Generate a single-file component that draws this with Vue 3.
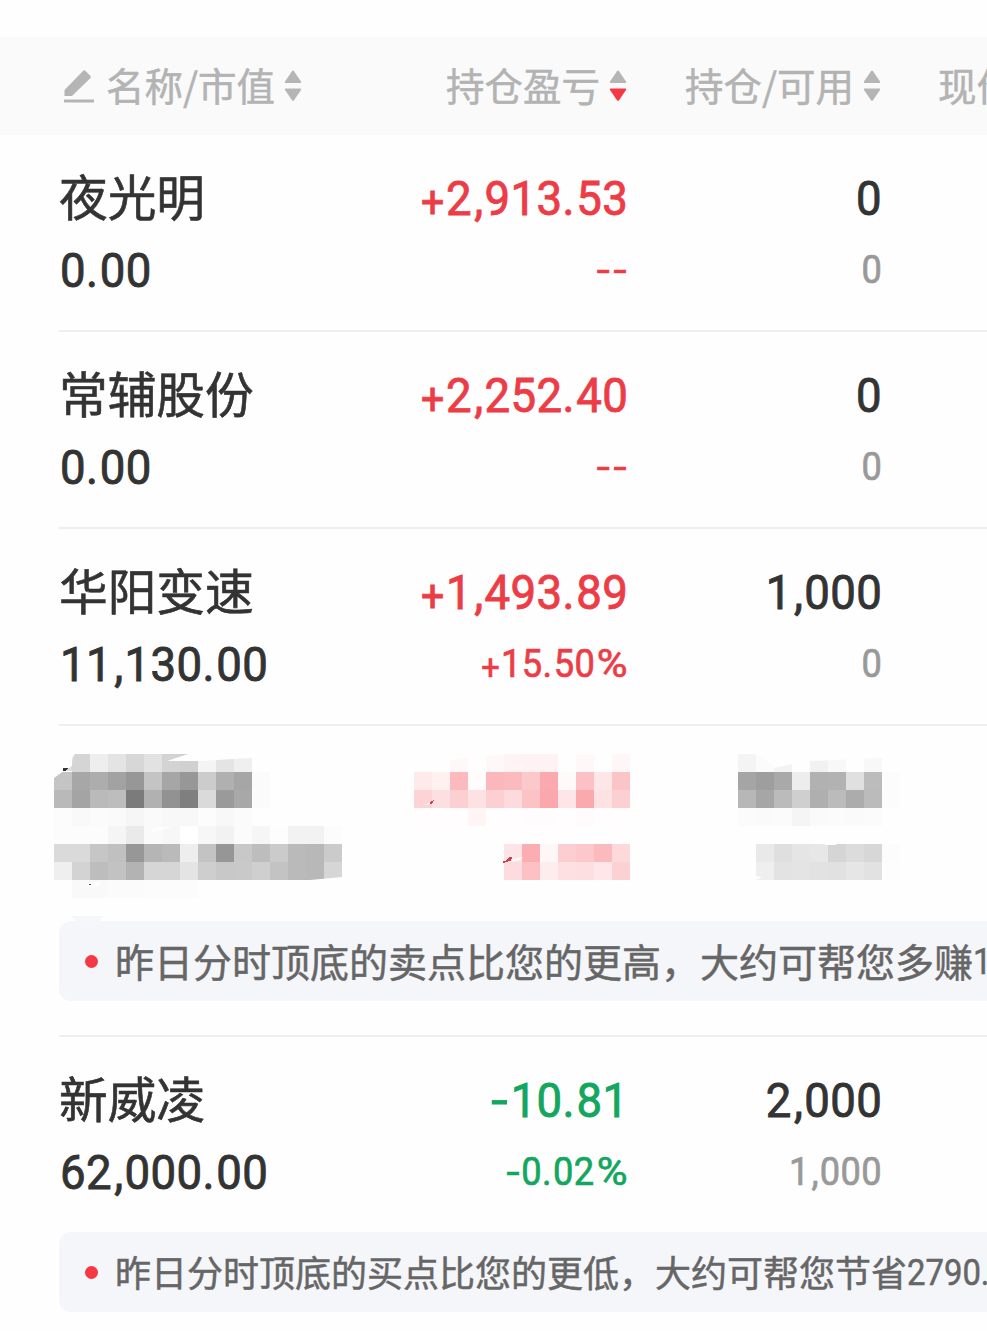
<script setup>
const split = (s) => s.match(/[\d]+|[^\d]/g)
const kind = (s) => ({ ',': 'comma', '.': 'dot', '+': 'plus', '-': 'minus', '%': 'pct' })[s] || 'digits'

const rows = [
  { name: '夜光明', value: '0.00', pnl: '+2,913.53', rate: '--', dir: 'up', hold: '0', avail: '0' },
  { name: '常辅股份', value: '0.00', pnl: '+2,252.40', rate: '--', dir: 'up', hold: '0', avail: '0' },
  { name: '华阳变速', value: '11,130.00', pnl: '+1,493.89', rate: '+15.50%', dir: 'up', hold: '1,000', avail: '0' },
  { masked: true, tip: '昨日分时顶底的卖点比您的更高，大约可帮您多赚', amount: '1', wide: true },
  { name: '新威凌', value: '62,000.00', pnl: '-10.81', rate: '-0.02%', dir: 'down', hold: '2,000', avail: '1,000', tip: '昨日分时顶底的买点比您的更低，大约可帮您节省', amount: '2790.' },
]

const CELL = 18
const gray = (x, y, list) =>
  list.split(' ').map((c, i) => ({ x: x + i * CELL, y, fill: '#' + c + c + c })).filter((c) => c.fill !== '#------')
const tint = (x, y, list) =>
  list.split(' ').map((c, i) => ({ x: x + i * CELL, y, fill: '#' + c })).filter((c) => c.fill !== '#-')

const cells = [
  ...gray(54, 28, '-- d5 ee e4 d7 e2 d3 d0 f4 e4 ef'),
  ...gray(54, 46, 'c4 a7 ad a2 97 c4 a6 97 cc b0 a6 fb'),
  ...gray(54, 64, 'b9 a4 ba bd 7b b1 92 7f da 9a a8 fb'),
  ...gray(54, 82, 'fc f9 fb fa f6 fa f8 f8 fc f8 fb'),
  ...gray(54, 100, 'fc fc fc f5 ea fa f7 ff f7 f2 fb f6 fd f2 f2 fc'),
  ...gray(54, 118, 'da da c6 c0 97 b5 ba ee c3 96 c8 bd cb ba b8 cb'),
  ...gray(54, 136, 'ef d3 bd c2 b3 d6 d6 e4 ce c8 c9 cf c3 ba b8 d6'),
  ...gray(54, 154, '-- f9 f9 fb fb fc fc fc'),
  ...tint(414, 28, '- - fff8f8 - fff8f8 fff4f3 fff2f3 fff2f3 - fff8f8 - fff7f7'),
  ...tint(414, 46, 'feeaeb fff1f0 fcbabe fffcfb fbb7bb fbbabd fbc9cc fba9ae fffafa fbc1c5 fee6e8 fbc5c8'),
  ...tint(414, 64, 'fdd3d5 fedfe1 fccfd2 fee1e2 fccfd2 fddadd fcc3c7 faa8ad fee5e7 faa9ad fee1e3 fcd0d2'),
  ...tint(414, 82, 'fffdfd fffdfd fffdfd fff5f5 fffdfd fffdfd fffcfd fffcfd fffdfd fffafb fffdfd fffdfd'),
  ...tint(504, 118, 'fee4e6 fbadb2 fff7f7 fcced1 fcc8cb fbbabe fdd9db'),
  ...tint(504, 136, 'fedbde fcc0c5 ffecec fee0e2 fedfe1 ffe6e8 fcd1d3'),
  ...gray(738, 28, 'f4 fb f3 fe f1 f8 fe f8'),
  ...gray(738, 46, 'a5 9e a9 ed b1 b2 e0 bc fc'),
  ...gray(738, 64, 'b7 a6 bb cf af bb ac bb fc'),
  ...gray(738, 82, 'fb fa fb f5 fa fb fa fb'),
  ...gray(756, 118, 'e9 df e5 e7 d5 dc d7 fc'),
  ...gray(756, 136, 'ef e3 e4 e2 e1 e6 e2 fd'),
]
</script>

<template>
  <main class="page">
    <header class="head grid">
      <div class="cell first">
        <svg class="pen" width="30" height="33" viewBox="0 0 30 33">
          <path d="M0.500 26V20L19.500 0.500Q20.500 0 21.500 1L26.500 6Q27 7 26.500 8L8 26Z" />
          <rect y="29.500" width="30" height="3" rx="0.500" />
        </svg>
        <span class="label">名称/市值</span>
        <svg class="sort" width="18" height="32" viewBox="0 0 18 32">
          <path d="M9 0.500Q9.500 0.500 10 1.200L17 11.500Q17.500 13 16.500 13H1.500Q0.500 13 1 11.500L8 1.200Q8.500 0.500 9 0.500Z" />
          <path d="M9 31Q9.500 31 10 30.300L17 20Q17.500 18.500 16.500 18.500H1.500Q0.500 18.500 1 20L8 30.300Q8.500 31 9 31Z" />
        </svg>
      </div>
      <div v-for="(label, i) in ['持仓盈亏', '持仓/可用']" :key="label" class="cell end">
        <span class="label">{{ label }}</span>
        <svg class="sort" width="18" height="32" viewBox="0 0 18 32">
          <path d="M9 0.500Q9.500 0.500 10 1.200L17 11.500Q17.500 13 16.500 13H1.500Q0.500 13 1 11.500L8 1.200Q8.500 0.500 9 0.500Z" />
          <path :class="{ active: i === 0 }" d="M9 31Q9.500 31 10 30.300L17 20Q17.500 18.500 16.500 18.500H1.500Q0.500 18.500 1 20L8 30.300Q8.500 31 9 31Z" />
        </svg>
      </div>
      <div class="cell last"><span class="label">现价</span></div>
    </header>

    <section v-for="(row, n) in rows" :key="n" class="row">
      <svg v-if="row.masked" class="mask" width="987" height="197" viewBox="0 -2 987 197" shape-rendering="crispEdges">
        <rect v-for="(c, i) in cells" :key="i" :x="c.x" :y="c.y" width="18" height="18" :fill="c.fill" />
        <g fill="#fefefe" shape-rendering="auto">
          <path d="M167 35L188 28H200V35Z" />
          <path d="M198 35L252 32V28H198Z" />
          <path d="M72 28H75Q72 30 72 38Z" />
          <path d="M54 46H72V39L54 52Z" />
          <path d="M150 107L154 101H172Z" />
          <path d="M310 154L342 151V156H280Z" />
          <path d="M86 159L101 155L99 160L88 161Z" />
          <path d="M450 34L504 28H450ZM752 28L764 31L774 42L792 38V27H752Z" />
          <path d="M810 35L882 32V27H810ZM424 79L433 75L430 78ZM824 118H836V119H826Z" />
          <path d="M513 133L523 131L520 134L510 136ZM756 150L762 151L756 154Z" />
        </g>
        <path d="M72 40L64 45H72Z" fill="#dcdcdc" />
        <path d="M63 42H68L65 45H63Z" fill="#333" />
        <rect x="89" y="158" width="2" height="1" fill="#555" />
        <path d="M71 190H104L98 195H75Z" fill="#f6f7fb" />
        <path d="M430 76L434 74L433 77L430 78ZM502 136L507 134L509 131H512L511 135L506 136L503 137Z" fill="#c9424b" />
      </svg>
      <div v-else class="grid body">
        <div class="stack">
          <div class="line name">{{ row.name }}</div>
          <div class="line num"><b v-for="(p, i) in split(row.value)" :key="i" :class="kind(p)">{{ p }}</b></div>
        </div>
        <div class="stack right" :class="row.dir">
          <div class="line num"><b v-for="(p, i) in split(row.pnl)" :key="i" :class="kind(p)">{{ p }}</b></div>
          <div class="line num small"><b v-for="(p, i) in split(row.rate)" :key="i" :class="kind(p)">{{ p }}</b></div>
        </div>
        <div class="stack right">
          <div class="line num"><b v-for="(p, i) in split(row.hold)" :key="i" :class="kind(p)">{{ p }}</b></div>
          <div class="line num small dim"><b v-for="(p, i) in split(row.avail)" :key="i" :class="kind(p)">{{ p }}</b></div>
        </div>
      </div>
      <div v-if="row.tip" class="tip" :class="{ wide: row.wide }">
        <i class="bullet"></i><span class="tip-text">{{ row.tip }}</span><span class="amount">{{ row.amount }}</span>
      </div>
    </section>
  </main>
</template>

<style>
body {
  background: #fefefe;
}
</style>

<style scoped>
.page {
  box-sizing: border-box;
  width: 987px;
  height: 1331px;
  padding-top: 37px;
  overflow: hidden;
  background: #fefefe;
  color: #333;
  font-family: Roboto, "Noto Sans CJK SC", sans-serif;
}
.grid {
  display: grid;
  grid-template-columns: 268px 300px 254px 106px;
  padding-left: 59px;
}
.head {
  height: 98px;
  background: #fafafa;
  color: #b3b3b3;
  font-family: "Noto Sans CJK SC", sans-serif;
}
.head svg {
  flex: none;
  fill: #b5b5b5;
}
.head svg .active {
  fill: #f53844;
}
.cell {
  display: flex;
  align-items: center;
  white-space: nowrap;
}
.label {
  font-size: 38.500px;
  line-height: 94px;
  padding-bottom: 4px;
  -webkit-text-stroke: 0.500px currentColor;
}
.end {
  justify-content: flex-end;
}
.first {
  padding-left: 5px;
}
.pen {
  margin-right: 12px;
}
.sort {
  margin-left: 9px;
}
.last {
  padding-left: 57px;
  overflow: hidden;
}
.row {
  position: relative;
}
.row + .row::before {
  content: "";
  position: absolute;
  top: 0;
  left: 59px;
  right: 0;
  height: 2px;
  background: #eee;
}
.body {
  height: 161px;
  padding-top: 28px;
  padding-bottom: 8px;
}
.row:first-of-type .body {
  padding-top: 26px;
}
.stack {
  display: flex;
  flex-direction: column;
}
.right {
  align-items: flex-end;
}
.line {
  height: 72px;
  line-height: 75px;
  white-space: nowrap;
}
.name {
  font-family: "Noto Sans CJK SC", sans-serif;
  font-size: 48.700px;
  line-height: 68px;
  -webkit-text-stroke: 0.600px currentColor;
}
.num {
  padding-left: 1px;
  font-size: 49px;
  letter-spacing: 0.400px;
  transform: scaleX(0.93);
  transform-origin: left center;
  -webkit-text-stroke: 0.900px currentColor;
}
.right .num {
  transform-origin: right center;
  margin-right: -1px;
}
.num b {
  font-weight: 400;
}
.num.small {
  font-size: 39px;
  -webkit-text-stroke-width: 0.700px;
}
.num .comma {
  margin: 0 0.020em 0 0.050em;
}
.num .dot {
  letter-spacing: 0.040em;
}
.num .plus {
  display: inline-block;
  line-height: 1;
  transform: translateY(0.080em) scale(0.900);
}
.num .minus {
  display: inline-block;
  line-height: 1;
  margin: 0 0.090em;
  transform: scaleX(1.300);
}
.num .pct {
  display: inline-block;
  line-height: 1;
  margin-left: 0.170em;
  transform: scaleX(1.160);
  transform-origin: right center;
}
.up {
  color: #ec3d47;
}
.down {
  color: #12a65f;
}
.dim {
  color: #999;
}
.mask {
  display: block;
}
.tip {
  display: flex;
  align-items: center;
  box-sizing: border-box;
  height: 80px;
  margin: 0 0 34px 59px;
  padding-left: 26px;
  border-radius: 12px 0 0 12px;
  background: #f5f6fa;
  color: #666;
  overflow: hidden;
  white-space: nowrap;
}
.bullet {
  flex: none;
  width: 13px;
  height: 13px;
  margin-right: 17px;
  border-radius: 50%;
  background: #f53844;
}
.tip-text {
  padding-bottom: 2px;
  font-family: "Noto Sans CJK SC", sans-serif;
  font-size: 36px;
  -webkit-text-stroke: 0.500px currentColor;
}
.wide .tip-text {
  font-size: 39px;
}
.amount {
  font-size: 36.500px;
  transform: scaleX(0.900);
  transform-origin: left center;
  -webkit-text-stroke: 0.500px currentColor;
}
</style>
